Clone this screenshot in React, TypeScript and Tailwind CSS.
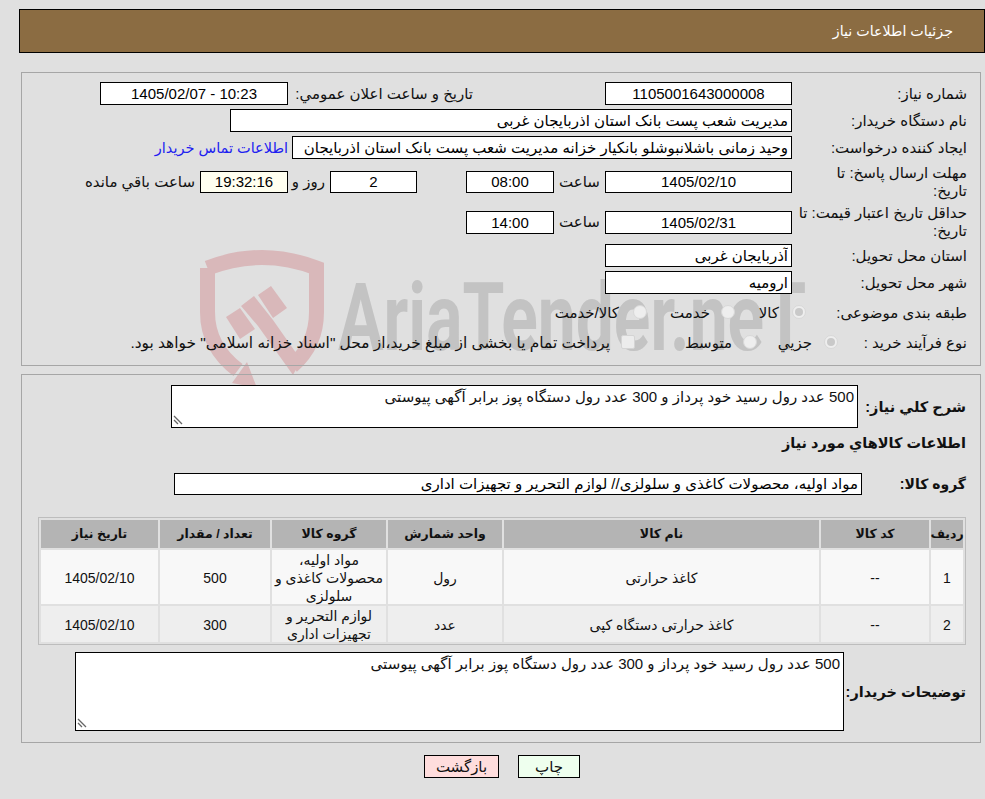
import React from 'react';

const Box: React.FC<{ value: string; className?: string }> = ({ value, className = '' }) => (
  <input
    readOnly
    value={value}
    className={`h-[23px] shrink-0 border border-black bg-white px-[3px] text-black outline-none ${className}`}
  />
);

const Memo: React.FC<{ value: string; className: string }> = ({ value, className }) => (
  <div className={`relative shrink-0 ${className}`}>
    <textarea
      readOnly
      defaultValue={value}
      className="h-full w-full resize-none border border-black bg-white px-[3px] pt-[2px] outline-none"
    />
    <svg className="absolute bottom-[3px] left-[2px]" width="10" height="10" viewBox="0 0 10 10" stroke="#666" strokeWidth="1.3">
      <path d="M1 1 L9 9 M1 5 L5 9" />
    </svg>
  </div>
);

const Option: React.FC<{ label: string; width?: string; kind?: 'on' | 'off' | 'square'; gap: string }> = ({ label, width = '', kind = 'off', gap }) => (
  <div className={`flex shrink-0 items-center ${width}`}>
    {kind === 'square' ? (
      <span className="-mt-[2px] h-[14px] w-[14px] shrink-0 rounded-[2px] border border-[#d4d4d4] bg-[#ececec]" />
    ) : (
      <span className="-mt-[2px] flex h-[14px] w-[14px] shrink-0 items-center justify-center rounded-full border border-[#d8d8d8] bg-[#eeeeee]">
        {kind === 'on' && <span className="h-[8px] w-[8px] rounded-full bg-[#c9c9c9]" />}
      </span>
    )}
    <span className={`whitespace-nowrap ${gap}`}>{label}</span>
  </div>
);

const Watermark = () => (
  <div className="pointer-events-none absolute left-0 top-0 h-[400px] w-[985px] overflow-hidden">
    <svg className="absolute left-[195px] top-[245px]" width="140" height="150" viewBox="195 245 140 150" fill="none">
      <path
        d="M207.5 268 Q262 247 316.5 268 V312 C316.5 338 306 354 292 366 M207.5 268 V312 C207.5 340 222 358 238 370"
        stroke="#d9b8ba"
        strokeWidth="15"
      />
      <path d="M226 317 L240 308 L255 329 L240 339 Z" fill="#d9b8ba" />
      <path d="M241 306 L254 296 L273 320 L301 360 L293 375 L258 326 Z" fill="#d9b8ba" />
      <path d="M258 295 L271 286 L287 308 L273 318 Z" fill="#d9b8ba" />
      <path d="M247 362 L257 388 L232 383 Z" fill="#d9b8ba" />
    </svg>
    <span className="absolute left-[338px] top-[258px] origin-left scale-x-[0.72] whitespace-nowrap font-['Roboto',sans-serif] text-[94px] font-bold leading-[120px] text-[#c3c3c3]">
      AriaTender.neT
    </span>
  </div>
);

const cols = 'grid grid-cols-[32px_108px_315px_114px_114px_110px_117px] gap-[2px]';

const rows = [
  { id: '1', name: 'کاغذ حرارتی', unit: 'رول', group: 'مواد اولیه، محصولات کاغذی و سلولزی', qty: '500', h: 'h-[54px]', bg: 'bg-[#f8f8f8]' },
  { id: '2', name: 'کاغذ حرارتی دستگاه کپی', unit: 'عدد', group: 'لوازم التحریر و تجهیزات اداری', qty: '300', h: 'h-[36px]', bg: 'bg-[#eeeeee]' },
];

const desc = '500 عدد رول رسید خود پرداز و 300 عدد رول دستگاه پوز برابر آگهی پیوستی';

export default function App() {
  return (
    <div
      dir="rtl"
      className="relative h-[799px] w-[985px] overflow-hidden bg-[#e0e0e0] font-['Liberation_Sans','DejaVu_Sans',sans-serif] text-[15px] leading-[18px] text-[#111]"
    >
      <Watermark />

      <div className="relative">
        <div className="ml-[19px] mt-[9px] flex h-[44px] items-center border border-black bg-[#8b6c42] pr-[31px] text-[14.25px] text-white">
          جزئیات اطلاعات نیاز
        </div>

        <div className="ml-[21px] mr-[4px] mt-[19px] flex h-[294px] flex-col border border-[#a6a6a6] pr-[13px] pt-[9px]">
          <div className="flex h-[23px] items-center">
            <div className="w-[175px] shrink-0">شماره نیاز:</div>
            <Box value="1105001643000008" className="w-[187px] text-center" />
            <div className="mr-[132px] w-[185px] shrink-0 whitespace-nowrap">تاریخ و ساعت اعلان عمومي:</div>
            <Box value="10:23 - 1405/02/07" className="w-[188px] text-center" />
          </div>
          <div className="mt-[4px] flex h-[23px] items-center">
            <div className="w-[175px] shrink-0">نام دستگاه خریدار:</div>
            <Box value="مدیریت شعب پست بانک استان اذربایجان غربی" className="w-[562px]" />
          </div>
          <div className="mt-[4px] flex h-[23px] items-center">
            <div className="w-[175px] shrink-0">ایجاد کننده درخواست:</div>
            <Box value="وحید زمانی باشلانبوشلو بانکیار خزانه مدیریت شعب پست بانک استان اذربایجان" className="w-[500px]" />
            <a className="mr-[4px] whitespace-nowrap text-[14.5px] text-[#2020f0]">اطلاعات تماس خریدار</a>
          </div>
          <div className="mt-[4px] flex h-[37px] items-center">
            <div className="w-[175px] shrink-0">
              مهلت ارسال پاسخ: تا
              <br />
              تاریخ:
            </div>
            <Box value="1405/02/10" className="!h-[22px] w-[187px] text-center" />
            <div className="w-[51px] shrink-0 text-center">ساعت</div>
            <Box value="08:00" className="!h-[22px] w-[88px] text-center" />
            <Box value="2" className="!h-[22px] mr-[49px] w-[87px] text-center" />
            <div className="w-[42px] shrink-0 pr-[5px]">روز و</div>
            <Box value="19:32:16" className="!h-[22px] w-[88px] !bg-[#fffff0] text-center" />
            <div className="mr-[5px] whitespace-nowrap">ساعت باقي مانده</div>
          </div>
          <div className="mt-[5px] flex h-[34px] items-center">
            <div className="w-[175px] shrink-0">حداقل تاریخ اعتبار قیمت: تا تاریخ:</div>
            <Box value="1405/02/31" className="w-[187px] text-center" />
            <div className="w-[51px] shrink-0 text-center">ساعت</div>
            <Box value="14:00" className="w-[88px] text-center" />
          </div>
          <div className="mt-[5px] flex h-[23px] items-center">
            <div className="w-[175px] shrink-0">استان محل تحویل:</div>
            <Box value="آذربایجان غربی" className="w-[187px]" />
          </div>
          <div className="mt-[4px] flex h-[23px] items-center">
            <div className="w-[175px] shrink-0">شهر محل تحویل:</div>
            <Box value="ارومیه" className="w-[187px]" />
          </div>
          <div className="mt-[7px] flex h-[24px] items-center">
            <div className="w-[161px] shrink-0 whitespace-nowrap">طبقه بندی موضوعی:</div>
            <Option label="کالا" kind="on" width="w-[71px]" gap="mr-[13px]" />
            <Option label="خدمت" width="w-[88px]" gap="mr-[11px]" />
            <Option label="کالا/خدمت" gap="mr-[14px]" />
          </div>
          <div className="mt-[6px] flex h-[24px] items-center">
            <div className="w-[129px] shrink-0 whitespace-nowrap">نوع فرآیند خرید :</div>
            <Option label="جزيي" kind="on" width="w-[81px]" gap="mr-[12px]" />
            <Option label="متوسط" width="w-[122px]" gap="mr-[11px]" />
            <Option label={'پرداخت تمام یا بخشی از مبلغ خرید،از محل "اسناد خزانه اسلامی" خواهد بود.'} kind="square" gap="mr-[11px] text-[15.4px]" />
          </div>
        </div>

        <div className="ml-[21px] mr-[4px] mt-[8px] flex h-[369px] flex-col border border-[#a6a6a6] pr-[14px] pt-[10px]">
          <div className="flex h-[43px] items-center">
            <div className="w-[108px] shrink-0 text-[14.5px] font-bold">شرح کلي نیاز:</div>
            <Memo value={desc} className="h-[43px] w-[687px]" />
          </div>
          <div className="mt-[5px] flex h-[20px] items-center text-[14.5px] font-bold">اطلاعات کالاهاي مورد نیاز</div>
          <div className="mt-[20px] flex h-[22px] items-center">
            <div className="w-[104px] shrink-0 text-[14px] font-bold">گروه کالا:</div>
            <Box value="مواد اولیه، محصولات کاغذی و سلولزی// لوازم التحریر و تجهیزات اداری" className="!h-[22px] w-[688px]" />
          </div>

          <div className="mt-[22px] w-[928px] border border-[#bdbdbd] p-[2px]">
            <div className={`${cols} text-[12.5px] font-bold`}>
              {['ردیف', 'کد کالا', 'نام کالا', 'واحد شمارش', 'گروه کالا', 'تعداد / مقدار', 'تاریخ نیاز'].map((h) => (
                <div key={h} className="flex h-[28px] items-center justify-center bg-[#b4b4b4] whitespace-nowrap">
                  {h}
                </div>
              ))}
            </div>
            {rows.map((r) => (
              <div key={r.id} className={`${cols} mt-[2px] text-[14px]`}>
                {[r.id, '--', r.name, r.unit, r.group, r.qty, '1405/02/10'].map((c, i) => (
                  <div key={i} className={`flex items-center justify-center px-[2px] pt-[1px] text-center ${r.h} ${r.bg}`}>
                    {c}
                  </div>
                ))}
              </div>
            ))}
          </div>

          <div className="mt-[7px] flex h-[79px] items-center">
            <div className="w-[122px] shrink-0 whitespace-nowrap text-[14.5px] font-bold">توضیحات خریدار:</div>
            <Memo value={desc} className="h-[79px] w-[769px]" />
          </div>
        </div>

        <div dir="ltr" className="mt-[12px] flex justify-start gap-[19px] pl-[424px]">
          <button className="h-[23px] w-[75px] border border-black bg-[#ffdddd]">بازگشت</button>
          <button className="h-[23px] w-[62px] border border-black bg-[#eeffee]">چاپ</button>
        </div>
      </div>
    </div>
  );
}
